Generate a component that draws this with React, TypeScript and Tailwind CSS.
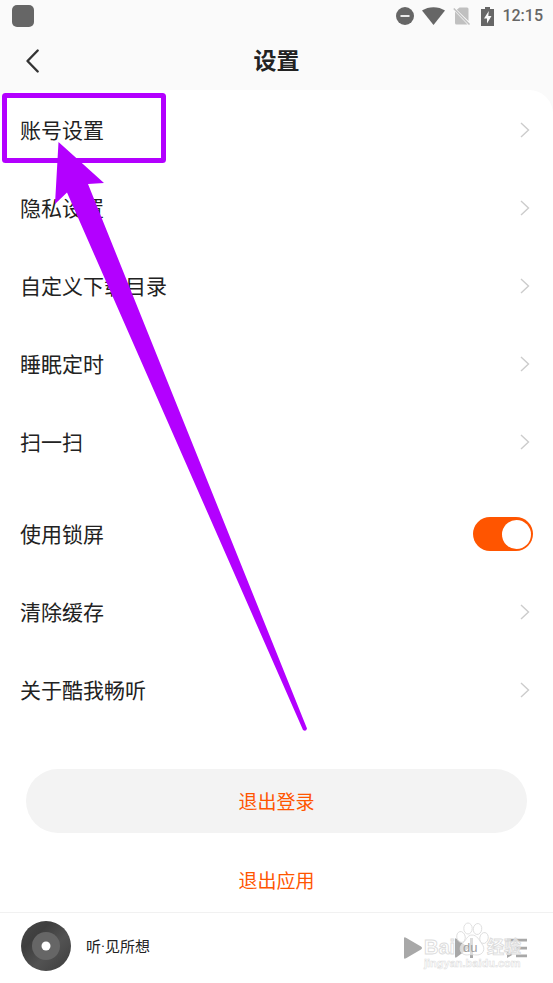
import { useState } from "react";

type Row = { label: string; kind: "link" | "switch" };

const groups: Row[][] = [
  [
    { label: "账号设置", kind: "link" },
    { label: "隐私设置", kind: "link" },
    { label: "自定义下载目录", kind: "link" },
    { label: "睡眠定时", kind: "link" },
    { label: "扫一扫", kind: "link" },
  ],
  [
    { label: "使用锁屏", kind: "switch" },
    { label: "清除缓存", kind: "link" },
    { label: "关于酷我畅听", kind: "link" },
  ],
];

export default function App() {
  return (
    <div className="relative min-h-screen overflow-hidden bg-[#fafafa] font-['Noto_Sans_CJK_SC',sans-serif] text-[#222222]">
      <StatusBar />
      <header className="grid h-[58px] grid-cols-[64px_1fr_64px] items-center">
        <button aria-label="返回" className="flex h-full items-center pl-6">
          <svg width="16" height="26" viewBox="0 0 16 26" fill="none" stroke="#333333" strokeWidth="2.4" strokeLinecap="round" strokeLinejoin="round">
            <path d="M13.7 2.5 3.500 13l10.200 10.500" />
          </svg>
        </button>
        <h1 className="pb-1 text-center text-[23px] font-bold leading-8">设置</h1>
      </header>

      <main className="rounded-t-3xl bg-white pt-px">
        <div className="flex flex-col gap-3.5">
          {groups.map((rows, i) => (
            <ul key={i}>
              {rows.map(row => (
                <li key={row.label}>
                  {row.kind === "link" ? <LinkRow label={row.label} /> : <SwitchRow label={row.label} />}
                </li>
              ))}
            </ul>
          ))}
        </div>

        <div className="mt-10 flex flex-col gap-4 px-[26px] text-[19px] text-[#ff5500]">
          <button className="h-16 rounded-full bg-[#f3f3f3]">退出登录</button>
          <button className="h-[63px] rounded-full">退出应用</button>
        </div>

        <PlayerBar />
      </main>

      <Annotation />
    </div>
  );
}

function StatusBar() {
  return (
    <div className="flex h-8 items-center justify-between pl-3 pr-2.5 text-[#666666]">
      <span className="size-[22px] rounded-[5px] bg-[#666666]" />
      <div className="flex items-center">
        <svg width="18" height="18" viewBox="0 0 18 18" className="mr-2">
          <circle cx="9" cy="9" r="9" fill="currentColor" />
          <path d="M4.5 9h9" stroke="#fafafa" strokeWidth="1.8" />
        </svg>
        <svg width="23" height="18" viewBox="0 0 23 18" className="mr-2">
          <path d="M0 3.6C6.500-1 16.500-1 23 3.600L11.500 18z" fill="currentColor" />
        </svg>
        <svg width="18" height="18" viewBox="0 0 18 18" className="mr-2.5">
          <path d="M6.500 .5h7.500q1.500 0 1.500 1.500v12L3.800 2.800zM2 4.500v11.500q0 1.500 1.500 1.500h11z" fill="#c0c0c0" />
          <path d="M.8 1.500 16.500 17.500" stroke="#c0c0c0" strokeWidth="1.500" />
        </svg>
        <svg width="13" height="19" viewBox="0 0 13 19" className="mr-2">
          <path d="M4 0h5v2h4v17H0V2h4z" fill="currentColor" />
          <path d="M7.800 4 3 11.500h3v5l4.500-7.500H7.300z" fill="#fafafa" />
        </svg>
        <span className="font-['Roboto',sans-serif] text-base font-medium">12:15</span>
      </div>
    </div>
  );
}

function LinkRow({ label }: { label: string }) {
  return (
    <a href="#" className="flex h-[78px] items-center justify-between px-5 text-[21px]">
      {label}
      <svg width="14" height="18" viewBox="0 0 14 18" fill="none" stroke="#cccccc" strokeWidth="1.4">
        <path d="M2 2l7.500 7L2 16" />
      </svg>
    </a>
  );
}

function SwitchRow({ label }: { label: string }) {
  const [on, setOn] = useState(true);
  return (
    <label className="flex h-[78px] items-center justify-between px-5 text-[21px]">
      {label}
      <input type="checkbox" role="switch" checked={on} onChange={e => setOn(e.target.checked)} className="peer sr-only" />
      <span className="flex h-[34px] w-[60px] items-center rounded-full bg-[#cccccc] px-0.5 peer-checked:justify-end peer-checked:bg-[#ff5500]">
        <span className="size-[29px] rounded-full bg-white" />
      </span>
    </label>
  );
}

function PlayerBar() {
  return (
    <footer className="flex items-start border-t border-[#f1f1f1] pb-2 pl-[21px] pr-[26px] pt-2">
      <svg width="50" height="50" viewBox="0 0 50 50">
        <defs>
          <linearGradient id="disc" x1="0" y1="0" x2="1" y2="1">
            <stop offset="0" stopColor="#484848" />
            <stop offset=".3" stopColor="#3e3e3e" />
            <stop offset=".6" stopColor="#525252" />
            <stop offset="1" stopColor="#3c3c3c" />
          </linearGradient>
        </defs>
        <circle cx="25" cy="25" r="25" fill="url(#disc)" />
        <circle cx="25" cy="25" r="14" fill="#666666" />
        <circle cx="25" cy="25" r="4.500" fill="#ffffff" />
      </svg>
      <span className="ml-[15px] flex-1 font-['Roboto','Noto_Sans_CJK_SC',sans-serif] text-[15px] leading-[52px]">听·见所想</span>
      <div className="relative flex h-[54px] items-center gap-[33px] text-[#a8a8a8]">
        <button aria-label="播放">
          <svg width="18" height="22" viewBox="0 0 18 22" fill="currentColor">
            <path d="M0 1.500Q0-.5 2 .7L17 9.500q2 1.500 0 3L2 21.300q-2 1.200-2-.8z" />
          </svg>
        </button>
        <button aria-label="下一首">
          <svg width="19" height="20" viewBox="0 0 19 20" fill="currentColor">
            <path d="M0 1.500Q0-.3 1.600.7L14 10 1.600 19.300Q0 20.300 0 18.500zM15 0h3v20h-3z" />
          </svg>
        </button>
        <button aria-label="播放列表">
          <svg width="20" height="20" viewBox="0 0 20 20" fill="currentColor">
            <path d="M0 .8h20v2.700H0zM9 8.700h11v2.700H9zM9 16.500h11v2.700H9zM0 13.500l5.500 3.200L0 20z" />
          </svg>
        </button>
        <Watermark />
      </div>
    </footer>
  );
}

function Watermark() {
  return (
    <svg width="120" height="60" viewBox="0 0 120 60" className="pointer-events-none absolute -right-2 -top-1.5" fill="#ffffff" fillOpacity=".6" stroke="#dcdcdc" strokeWidth=".9" fontFamily="Liberation Sans, Noto Sans CJK SC, sans-serif">
      <ellipse cx="46" cy="22" rx="4.200" ry="5.500" transform="rotate(-12 46 22)" />
      <ellipse cx="53" cy="13.500" rx="4.200" ry="5.500" />
      <ellipse cx="62.500" cy="14" rx="4.200" ry="5.500" transform="rotate(8 62.500 14)" />
      <ellipse cx="69" cy="23" rx="4.200" ry="5.500" transform="rotate(12 69 23)" />
      <path d="M57 20c5 0 7 5 10 9 4 5 1 11-5 11-4 0-6-1-10 0-6 0-9-6-5-11 4-3 5-9 10-9z" />
      <text x="9" y="39" fontSize="20" fontWeight="700">Bai</text>
      <text x="48" y="37" fontSize="13" fill="#a0a0a0" fillOpacity="1" stroke="none">du</text>
      <text x="72" y="38" fontSize="17" fontWeight="700">经验</text>
      <text x="9" y="52" fontSize="11" fontWeight="700" strokeWidth=".5">jingyan.baidu.com</text>
    </svg>
  );
}

// Highlight frame and the arrow pointing at the first row
function Annotation() {
  return (
    <svg width="320" height="740" viewBox="0 0 320 740" className="pointer-events-none absolute left-0 top-0">
      <rect x="4.500" y="95.500" width="159" height="65" rx="1" fill="none" stroke="#b300ff" strokeWidth="5" strokeLinejoin="round" />
      <path d="M58.500 142 104 183 88 184 307 728.500Q306 732 303 730L67 192.500 55 204z" fill="#b300ff" />
    </svg>
  );
}
